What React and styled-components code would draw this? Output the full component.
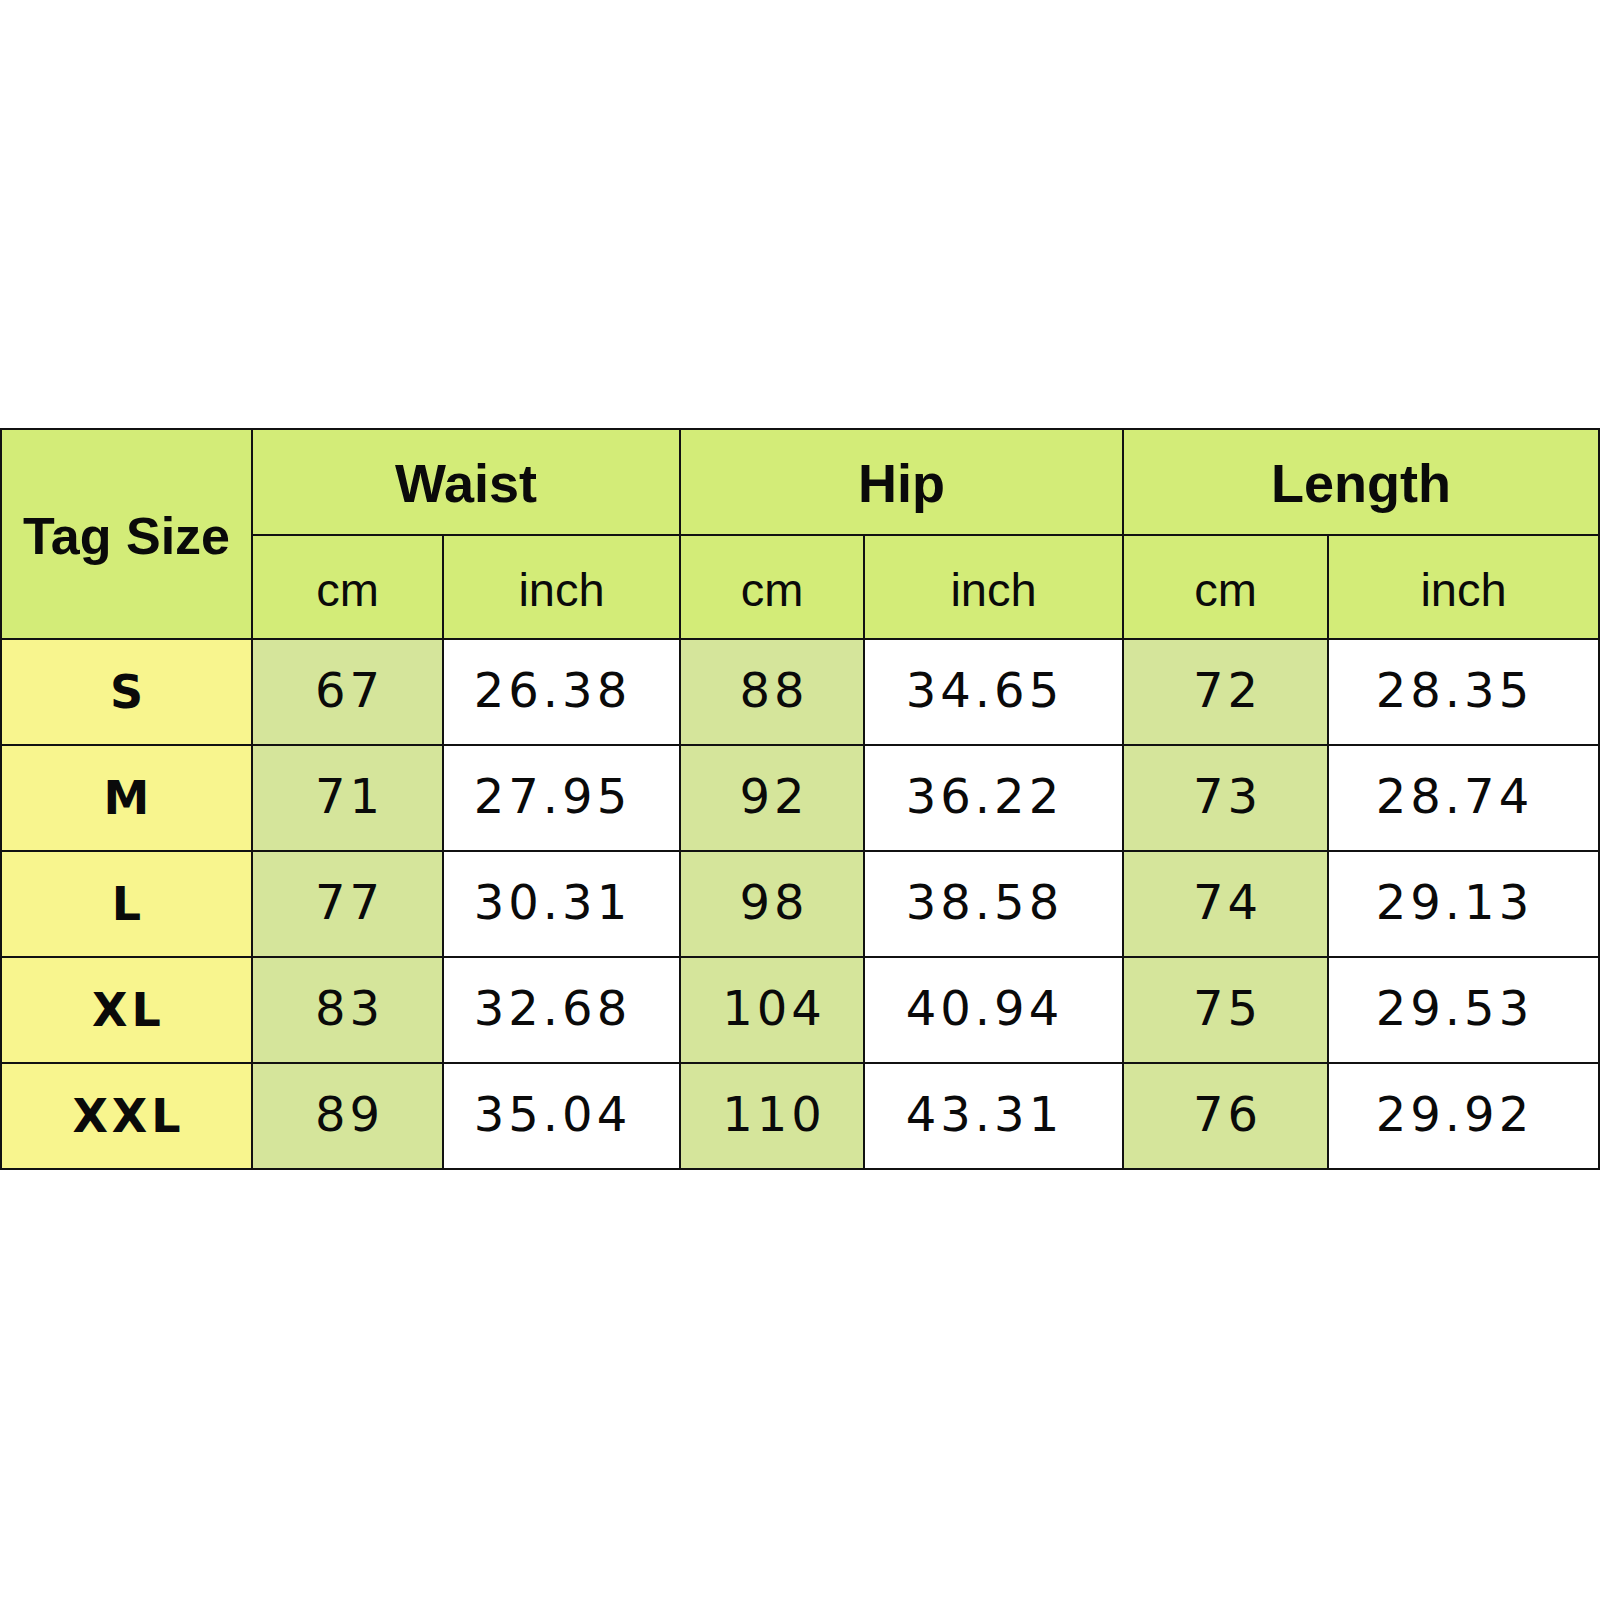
import React from 'react'
import styled, { createGlobalStyle } from 'styled-components'

const GlobalStyle = createGlobalStyle`
  html, body {
    margin: 0;
    padding: 0;
    background: #ffffff;
  }
  body {
    width: 1600px;
    height: 1600px;
    font-family: "Liberation Sans", Arial, sans-serif;
  }
`;

const Page = styled.div`
  width: 1600px;
  height: 1600px;
  background: #ffffff;
  padding-top: 428px;
  box-sizing: border-box;
`;

const Table = styled.div`
  display: grid;
  grid-template-columns: 249px 189px 235px 182px 257px 203px 269px;
  grid-template-rows: 104px 102px repeat(5, 104px);
  gap: 2px;
  padding: 2px;
  background: #111111;
  width: 1600px;
  box-sizing: border-box;
`;

const Cell = styled.div`
  display: flex;
  align-items: center;
  justify-content: center;
  background: ${p => p.$bg || '#ffffff'};
  color: #0a0a0a;
  grid-column: ${p => p.$span ? `span ${p.$span}` : 'auto'};
  grid-row: ${p => p.$rows ? `span ${p.$rows}` : 'auto'};
`;

const HeadCell = styled(Cell)`
  background: #d3ec78;
  font-family: "Liberation Sans", Arial, sans-serif;
  font-weight: 700;
  font-size: ${p => p.$size || 54}px;
  padding-top: ${p => p.$rows ? 4 : 2}px;
`;

const UnitCell = styled(Cell)`
  background: #d3ec78;
  font-family: "Liberation Sans", Arial, sans-serif;
  font-size: 47px;
  padding-top: 4px;
`;

const SizeCell = styled(Cell)`
  background: #f8f58e;
  font-family: "DejaVu Sans", sans-serif;
  font-weight: 700;
  font-size: 46px;
  letter-spacing: 4px;
  padding-left: 4px;
`;

const ValueCell = styled(Cell)`
  background: ${p => p.$cm ? '#d5e59b' : '#ffffff'};
  font-family: "DejaVu Sans", sans-serif;
  font-size: 48px;
  letter-spacing: 4px;
  padding-left: 4px;
  padding-right: ${p => p.$cm ? 0 : 22}px;
  padding-bottom: 4px;
`;

const groups = ['Waist', 'Hip', 'Length'];

const rows = [
  ['S', '67', '26.38', '88', '34.65', '72', '28.35'],
  ['M', '71', '27.95', '92', '36.22', '73', '28.74'],
  ['L', '77', '30.31', '98', '38.58', '74', '29.13'],
  ['XL', '83', '32.68', '104', '40.94', '75', '29.53'],
  ['XXL', '89', '35.04', '110', '43.31', '76', '29.92'],
];

const App = () => {
  return (
    <Page>
      <GlobalStyle />
      <Table>
        <HeadCell $rows={2} $size={52}>Tag Size</HeadCell>
        {groups.map(g => (
          <HeadCell key={g} $span={2}>{g}</HeadCell>
        ))}
        {groups.map(g => (
          <React.Fragment key={g}>
            <UnitCell>cm</UnitCell>
            <UnitCell>inch</UnitCell>
          </React.Fragment>
        ))}
        {rows.map(([size, ...vals]) => (
          <React.Fragment key={size}>
            <SizeCell>{size}</SizeCell>
            {vals.map((v, i) => (
              <ValueCell key={i} $cm={i % 2 === 0}>{v}</ValueCell>
            ))}
          </React.Fragment>
        ))}
      </Table>
    </Page>
  )
}

export default App
